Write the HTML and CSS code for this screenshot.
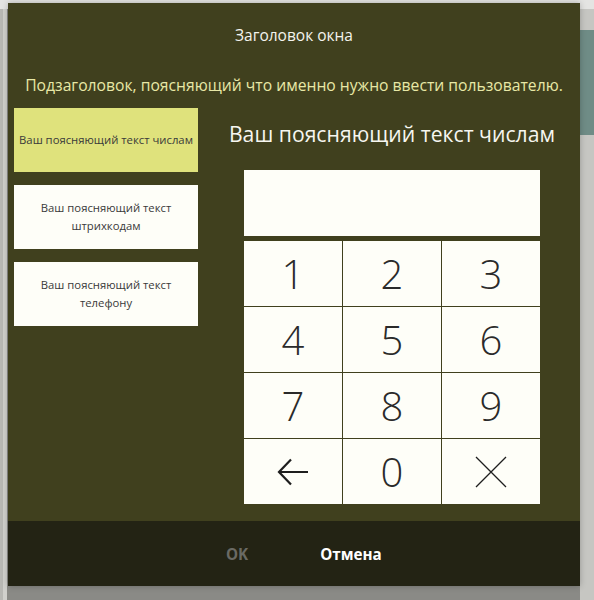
FILE: index.html
```html
<!DOCTYPE html>
<html lang="ru">
<head>
<meta charset="utf-8">
<title>Ввод</title>
<link rel="stylesheet" href="styles.css">
</head>
<body>
<div class="backdrop-right"></div>
<div class="dialog">
  <div class="title">Заголовок окна</div>
  <div class="subtitle">Подзаголовок, поясняющий что именно нужно ввести пользователю.</div>
  <div class="content">
    <div class="sidebar">
      <button class="mode active">Ваш поясняющий текст числам</button>
      <button class="mode">Ваш поясняющий текст<br>штрихкодам</button>
      <button class="mode">Ваш поясняющий текст<br>телефону</button>
    </div>
    <div class="main">
      <div class="heading">Ваш поясняющий текст числам</div>
      <div class="display"></div>
      <div class="keypad">
        <div class="key">1</div>
        <div class="key">2</div>
        <div class="key">3</div>
        <div class="key">4</div>
        <div class="key">5</div>
        <div class="key">6</div>
        <div class="key">7</div>
        <div class="key">8</div>
        <div class="key">9</div>
        <div class="key"><svg width="32" height="30" viewBox="0 0 32 30"><path d="M2 15 H31 M14 2.5 L2 15 L14 27.5" fill="none" stroke="#1e1e1e" stroke-width="2.2"/></svg></div>
        <div class="key">0</div>
        <div class="key"><svg width="32" height="32" viewBox="0 0 32 32"><path d="M1 1 L31 31 M31 1 L1 31" fill="none" stroke="#1e1e1e" stroke-width="1.3"/></svg></div>
      </div>
    </div>
  </div>
  <div class="footer">
    <button class="action disabled">OK</button>
    <button class="action">Отмена</button>
  </div>
</div>
</body>
</html>
```
FILE: styles.css
```css
html, body {
  margin: 0;
  padding: 0;
}
body {
  width: 594px;
  height: 600px;
  overflow: hidden;
  font-family: "Open Sans", "Noto Sans", sans-serif;
  background:
    linear-gradient(#e4e4e2 0, #e4e4e2 9px, transparent 9px),
    linear-gradient(90deg, #b8b8b4 0, #b8b8b4 3px, #d0d0cc 3px, #d0d0cc 7px, #8a8a86 7px, #8a8a86 580px, #c6c6c2 580px);
  position: relative;
}
.backdrop-right {
  position: absolute;
  left: 580px;
  top: 30px;
  width: 14px;
  height: 105px;
  background: #6f8c86;
}
.dialog {
  position: relative;
  margin: 3px 0 0 8px;
  width: 572px;
  height: 583px;
  background: #40401e;
  display: flex;
  flex-direction: column;
  box-shadow: 0 0 6px rgba(0,0,0,0.25);
}
.title {
  color: #f4f4ee;
  font-size: 15.5px;
  line-height: 20px;
  text-align: center;
  padding-top: 22px;
}
.subtitle {
  color: #e8e8a6;
  font-size: 15.7px;
  line-height: 20px;
  text-align: center;
  margin-top: 30px;
  white-space: nowrap;
}
.content {
  display: flex;
  gap: 6px;
  margin-top: 13px;
  padding-left: 6px;
  flex: 1;
}
.sidebar {
  width: 184px;
  display: flex;
  flex-direction: column;
  gap: 13px;
}
.mode {
  height: 64px;
  border: none;
  margin: 0;
  background: #fefef8;
  color: #3a3a3a;
  font-family: "Open Sans", "Noto Sans", sans-serif;
  font-size: 11.3px;
  line-height: 18px;
  text-align: center;
  padding: 0 2px;
  white-space: nowrap;
}
.mode.active {
  background: #dfe27c;
}
.main {
  width: 376px;
  display: flex;
  flex-direction: column;
  align-items: center;
}
.heading {
  color: #f6f6f0;
  font-size: 21.2px;
  line-height: 26px;
  margin-top: 13px;
  white-space: nowrap;
}
.display {
  width: 296px;
  height: 66px;
  background: #fefef8;
  margin-top: 23px;
}
.keypad {
  margin-top: 5px;
  width: 296px;
  display: grid;
  grid-template-columns: repeat(3, 1fr);
  grid-auto-rows: 65px;
  gap: 1px;
  background: #40401e;
}
.key {
  background: #fefef8;
  display: flex;
  align-items: center;
  justify-content: center;
  font-size: 40px;
  font-weight: 300;
  color: #2a2a2a;
}
.footer {
  height: 65px;
  background: #232314;
  display: flex;
  justify-content: center;
  align-items: center;
}
.action {
  width: 114px;
  background: none;
  border: none;
  color: #ffffff;
  font-family: "Open Sans", "Noto Sans", sans-serif;
  font-weight: 700;
  font-size: 15.2px;
  padding: 0;
}
.action.disabled {
  color: #6a6a64;
}
```
